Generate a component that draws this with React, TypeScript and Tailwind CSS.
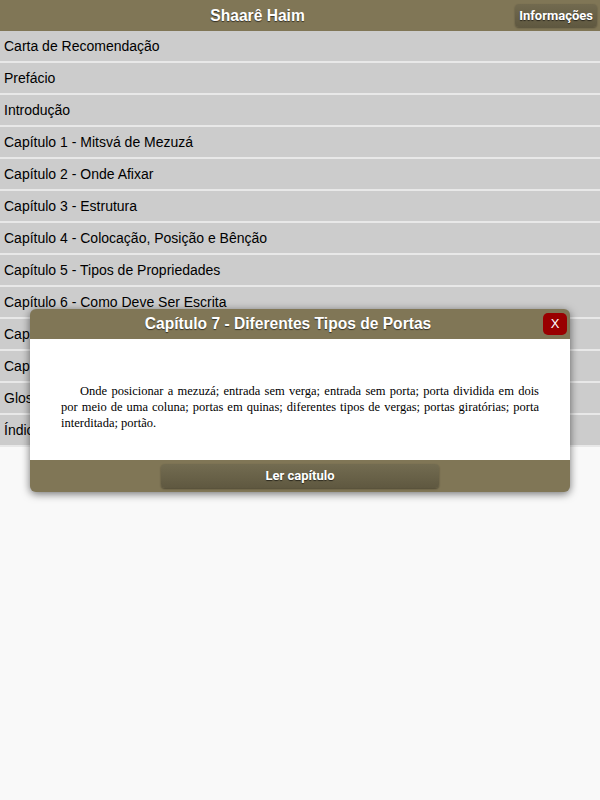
import { useState } from 'react';

const items = [
  'Carta de Recomendação',
  'Prefácio',
  'Introdução',
  'Capítulo 1 - Mitsvá de Mezuzá',
  'Capítulo 2 - Onde Afixar',
  'Capítulo 3 - Estrutura',
  'Capítulo 4 - Colocação, Posição e Bênção',
  'Capítulo 5 - Tipos de Propriedades',
  'Capítulo 6 - Como Deve Ser Escrita',
  'Capítulo 7 - Diferentes Tipos de Portas',
  'Capítulo 8 - Inspeção',
  'Glossário',
  'Índice',
];

const shadowText = { textShadow: '0 1px 1px rgba(0,0,0,0.6)' };

export default function App() {
  const [open, setOpen] = useState(true);

  return (
    <div className="relative min-h-[800px] bg-[#f9f9f9] font-['Liberation_Sans',Arial,sans-serif]">
      <header className="flex h-[31px] items-center bg-[#807656] pr-[3px]">
        <h1 className="flex-1 text-center text-[15.6px] font-bold text-white" style={shadowText}>
          Shaarê Haim
        </h1>
        <button className="h-[23px] rounded-[4px] bg-gradient-to-b from-[#726a4f] to-[#5f5840] px-[4px] font-['Roboto',sans-serif] text-[13px] font-bold text-white shadow-[0_1px_2px_rgba(0,0,0,0.35)]" style={shadowText}>
          Informações
        </button>
      </header>

      <ul>
        {items.map((item) => (
          <li
            key={item}
            className="flex h-[32px] items-center border-b-2 border-[#e8e8e8] bg-[#cccccc] pl-[4px] pt-[1px] text-[14px] text-black"
            onClick={() => setOpen(true)}
          >
            {item}
          </li>
        ))}
      </ul>

      {open ? (
        <div className="absolute left-[30px] top-[309px] w-[540px] overflow-hidden rounded-[6px] bg-[#807656] shadow-[0_2px_8px_rgba(0,0,0,0.55)]">
          <div className="flex h-[30px] items-center px-[3px]">
            <h2 className="flex-1 text-center text-[15.6px] font-bold text-white" style={shadowText}>
              Capítulo 7 - Diferentes Tipos de Portas
            </h2>
            <button
              className="flex h-[22px] w-[24px] items-center justify-center rounded-[5px] bg-[#990000] text-[13px] text-white"
              onClick={() => setOpen(false)}
            >
              X
            </button>
          </div>
          <div className="h-[121px] bg-white px-[31px] pt-[44px]">
            <p className="indent-[19px] text-justify font-['Liberation_Serif','Times_New_Roman',serif] text-[12.5px] leading-[16px] text-black">
              Onde posicionar a mezuzá; entrada sem verga; entrada sem porta; porta dividida em dois por meio de uma
              coluna; portas em quinas; diferentes tipos de vergas; portas giratórias; porta interditada; portão.
            </p>
          </div>
          <div className="flex h-[32px] items-center justify-center">
            <button className="h-[24px] w-[278px] rounded-[4px] bg-gradient-to-b from-[#736c51] to-[#5f5840] font-['Roboto',sans-serif] text-[13px] font-bold text-white shadow-[0_1px_2px_rgba(0,0,0,0.4)]" style={shadowText}>
              Ler capítulo
            </button>
          </div>
        </div>
      ) : null}
    </div>
  );
}
